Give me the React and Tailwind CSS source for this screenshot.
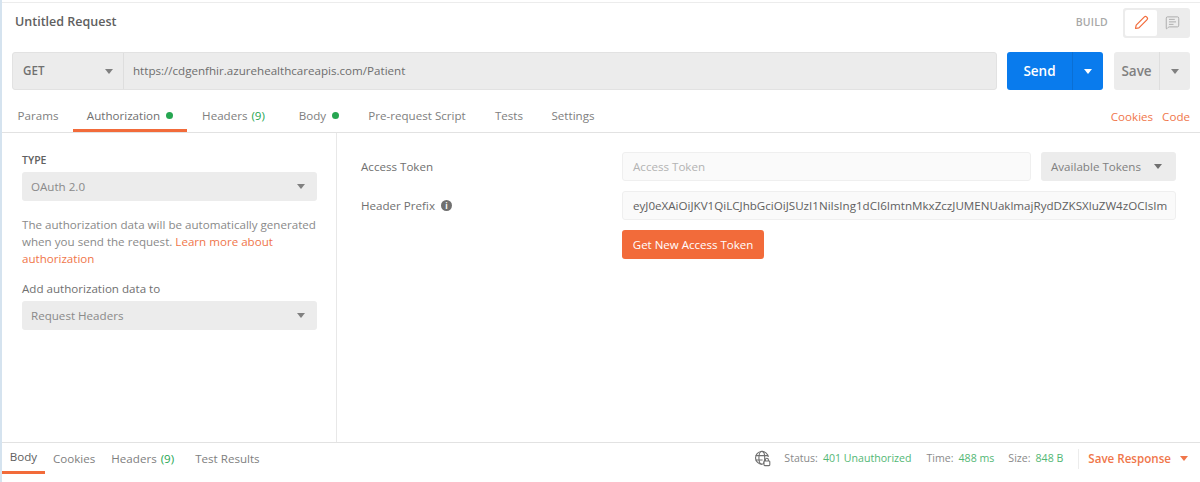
import { MessageSquareText } from 'lucide-react';

function Caret({ className = 'border-t-[#808080]' }) {
  return <span className={`block w-0 h-0 border-x-[4.5px] border-x-transparent border-t-[5px] ${className}`} />;
}

function Dot() {
  return <span className="inline-block w-[7px] h-[7px] rounded-full bg-[#26a651]" />;
}

function PencilIcon() {
  return (
    <svg width="15" height="15" viewBox="0 0 15 15" fill="none" stroke="#f26b3a" strokeWidth="1.2" strokeLinejoin="round">
      <path d="M1.5 13.5l.7-3.4L10.4 1.9a1.5 1.5 0 0 1 2.1 0l.6.6a1.5 1.5 0 0 1 0 2.1L4.9 12.8z" />
    </svg>
  );
}

function GlobeLock() {
  return (
    <svg width="17" height="17" viewBox="0 0 17 17" fill="none" stroke="#707070" strokeWidth="1.1">
      <path d="M8 14.2A6.4 6.4 0 1 1 14.3 7" />
      <ellipse cx="7.8" cy="7.8" rx="2.9" ry="6.4" />
      <path d="M1.6 5.6h12.4M1.6 10h7" />
      <rect x="10" y="11" width="5.8" height="4.6" rx="0.8" fill="#fff" />
      <path d="M11.4 11V9.8a1.5 1.5 0 0 1 3 0V11" />
    </svg>
  );
}

function Select({ label, className = '' }) {
  return (
    <div className={`h-[29px] rounded-[3px] bg-[#ececec] flex items-center justify-between pl-[9px] pr-[12px] text-[#8a8a8a] ${className}`}>
      <span>{label}</span>
      <Caret />
    </div>
  );
}

function Tab({ className = '', children }) {
  return <div className={`h-[32px] pt-[2px] border-b-[3px] border-b-transparent flex items-center justify-center gap-[4px] ${className}`}>{children}</div>;
}

export default function App() {
  return (
    <div className="w-[1200px] h-[482px] overflow-hidden bg-white text-[11.6px] text-[#808080] flex flex-col border-l-2 border-l-[#d5e3ef] font-['Open_Sans',sans-serif]">
      {/* request title */}
      <div className="h-[50px] shrink-0 border-t border-t-[#ececec] mt-[2px] pl-[13px] pr-[10px] pb-[10px] flex items-center justify-between">
        <span className="font-semibold text-[12.5px] text-[#606060]">Untitled Request</span>
        <div className="flex items-center gap-[15px]">
          <span className="text-[10.5px] font-semibold text-[#a8a8a8] tracking-[0.2px]">BUILD</span>
          <div className="flex w-[67px] h-[30px] rounded-[3px] bg-[#ececec] p-[2px]">
            <div className="w-[32px] bg-white rounded-[2px] flex items-center justify-center">
              <PencilIcon />
            </div>
            <div className="flex-1 flex items-center justify-center">
              <MessageSquareText size={15} strokeWidth={1.2} className="text-[#9a9a9a]" />
            </div>
          </div>
        </div>
      </div>

      {/* url bar */}
      <div className="h-[38px] shrink-0 pl-[10px] pr-[10px] flex gap-[10px]">
        <div className="flex-1 flex rounded-[3px] bg-[#ececec] border border-[#e2e2e2]">
          <div className="w-[111px] flex items-center justify-between px-[10px] border-r border-r-[#dedede]">
            <span className="font-semibold text-[#707070] text-[11.6px]">GET</span>
            <Caret />
          </div>
          <div className="flex-1 flex items-center pl-[9px] text-[#6e6e6e]">https://cdgenfhir.azurehealthcareapis.com/Patient</div>
        </div>
        <div className="w-[96px] flex rounded-[3px] bg-[#097bed] text-white">
          <div className="flex-1 flex items-center justify-center font-semibold text-[13.5px] border-r border-r-[#0a6fd4]">Send</div>
          <div className="w-[30px] flex items-center justify-center"><Caret className="border-t-white" /></div>
        </div>
        <div className="w-[76px] ml-[1px] flex rounded-[3px] bg-[#ececec]">
          <div className="flex-1 flex items-center justify-center font-semibold text-[13.5px] text-[#808080] border-r border-r-[#dedede]">Save</div>
          <div className="w-[30px] flex items-center justify-center"><Caret /></div>
        </div>
      </div>

      {/* tabs */}
      <div className="h-[43px] shrink-0 border-b border-b-[#e2e2e2] flex items-end justify-between pr-[10px]">
        <div className="flex">
          <Tab className="ml-[1px] w-[70px]">Params</Tab>
          <div className="w-[114px] h-[32px] pt-[2px] border-b-[3px] border-b-[#f26b3a] flex items-center justify-center gap-[6px] text-[#707070]">
            Authorization <Dot />
          </div>
          <Tab className="w-[93px]">Headers <span className="text-[#26a651]">(9)</span></Tab>
          <Tab className="w-[78px] gap-[6px]">Body <Dot /></Tab>
          <Tab className="w-[118px]">Pre-request Script</Tab>
          <Tab className="w-[66px]">Tests</Tab>
          <Tab className="w-[62px]">Settings</Tab>
        </div>
        <div className="h-[32px] pt-[2px] flex items-center gap-[9px] text-[#f0764a]">
          <span>Cookies</span>
          <span>Code</span>
        </div>
      </div>

      {/* auth panel */}
      <div className="flex-1 flex min-h-0">
        <div className="w-[335px] shrink-0 border-r border-r-[#e8e8e8] pl-[20px] pr-[19px] pt-[20px]">
          <div className="text-[10.5px] font-semibold text-[#606060] leading-[14px]">TYPE</div>
          <Select label="OAuth 2.0" className="mt-[5px]" />
          <p className="mt-[15px] leading-[17px] text-[#8a8a8a] whitespace-nowrap">
            The authorization data will be automatically generated<br />
            when you send the request. <span className="text-[#f0764a]">Learn more about</span><br />
            <span className="text-[#f0764a]">authorization</span>
          </p>
          <div className="mt-[13px] leading-[17px] text-[#707070]">Add authorization data to</div>
          <Select label="Request Headers" className="mt-[4px]" />
        </div>
        <div className="flex-1 min-w-0 pl-[24px] pr-[24px] pt-[19px] flex">
          <div className="w-[261px] shrink-0 text-[#707070]">
            <div className="h-[29px] flex items-center pt-[1px]">Access Token</div>
            <div className="h-[29px] mt-[10px] flex items-center gap-[6px]">
              Header Prefix
              <span className="w-[11px] h-[11px] rounded-full bg-[#707070] text-white text-[8px] font-bold leading-[11px] text-center">i</span>
            </div>
          </div>
          <div className="flex-1 min-w-0">
            <div className="flex gap-[10px]">
              <div className="flex-1 h-[29px] rounded-[3px] bg-[#fafafa] border border-[#efefef] flex items-center pl-[10px] text-[#b3b3b3]">Access Token</div>
              <div className="w-[135px] h-[29px] rounded-[3px] bg-[#ececec] flex items-center justify-between pl-[10px] pr-[14px] text-[#808080]">
                Available Tokens <Caret className="border-t-[#707070]" />
              </div>
            </div>
            <div className="mt-[10px] h-[29px] rounded-[3px] bg-[#fafafa] border border-[#efefef] flex items-center pl-[10px] text-[#606060]">
              <span className="block w-full overflow-hidden whitespace-nowrap">eyJ0eXAiOiJKV1QiLCJhbGciOiJSUzI1NiIsIng1dCI6ImtnMkxZczJUMENUaklmajRydDZKSXluZW4zOCIsIm</span>
            </div>
            <button className="mt-[10px] h-[29px] w-[142px] rounded-[3px] bg-[#f26b3a] text-white font-medium text-[11.5px]">Get New Access Token</button>
          </div>
        </div>
      </div>

      {/* response bar */}
      <div className="h-[40px] shrink-0 border-t border-t-[#e2e2e2] flex justify-between pr-[12px]">
        <div className="flex h-[31px]">
          <div className="w-[43px] flex items-center justify-center border-b-[3px] border-b-[#f26b3a] text-[#606060]">Body</div>
          <div className="ml-[8px] flex items-center">Cookies</div>
          <div className="ml-[16px] flex items-center gap-[4px]">Headers <span className="text-[#26a651]">(9)</span></div>
          <div className="ml-[21px] flex items-center">Test Results</div>
        </div>
        <div className="flex h-[31px] items-center text-[10.6px] text-[#8a8a8a]">
          <GlobeLock />
          <span className="ml-[13px]">Status:</span>
          <span className="ml-[5px] text-[#26a651] opacity-80">401 Unauthorized</span>
          <span className="ml-[15px]">Time:</span>
          <span className="ml-[5px] text-[#26a651] opacity-80">488 ms</span>
          <span className="ml-[14px]">Size:</span>
          <span className="ml-[5px] text-[#26a651] opacity-80">848 B</span>
          <span className="ml-[15px] h-[20px] border-l border-l-[#ececec]" />
          <span className="ml-[9px] font-semibold text-[11.6px] text-[#f0764a]">Save Response</span>
          <span className="ml-[9px]"><Caret className="border-t-[#f0764a]" /></span>
        </div>
      </div>
    </div>
  );
}
